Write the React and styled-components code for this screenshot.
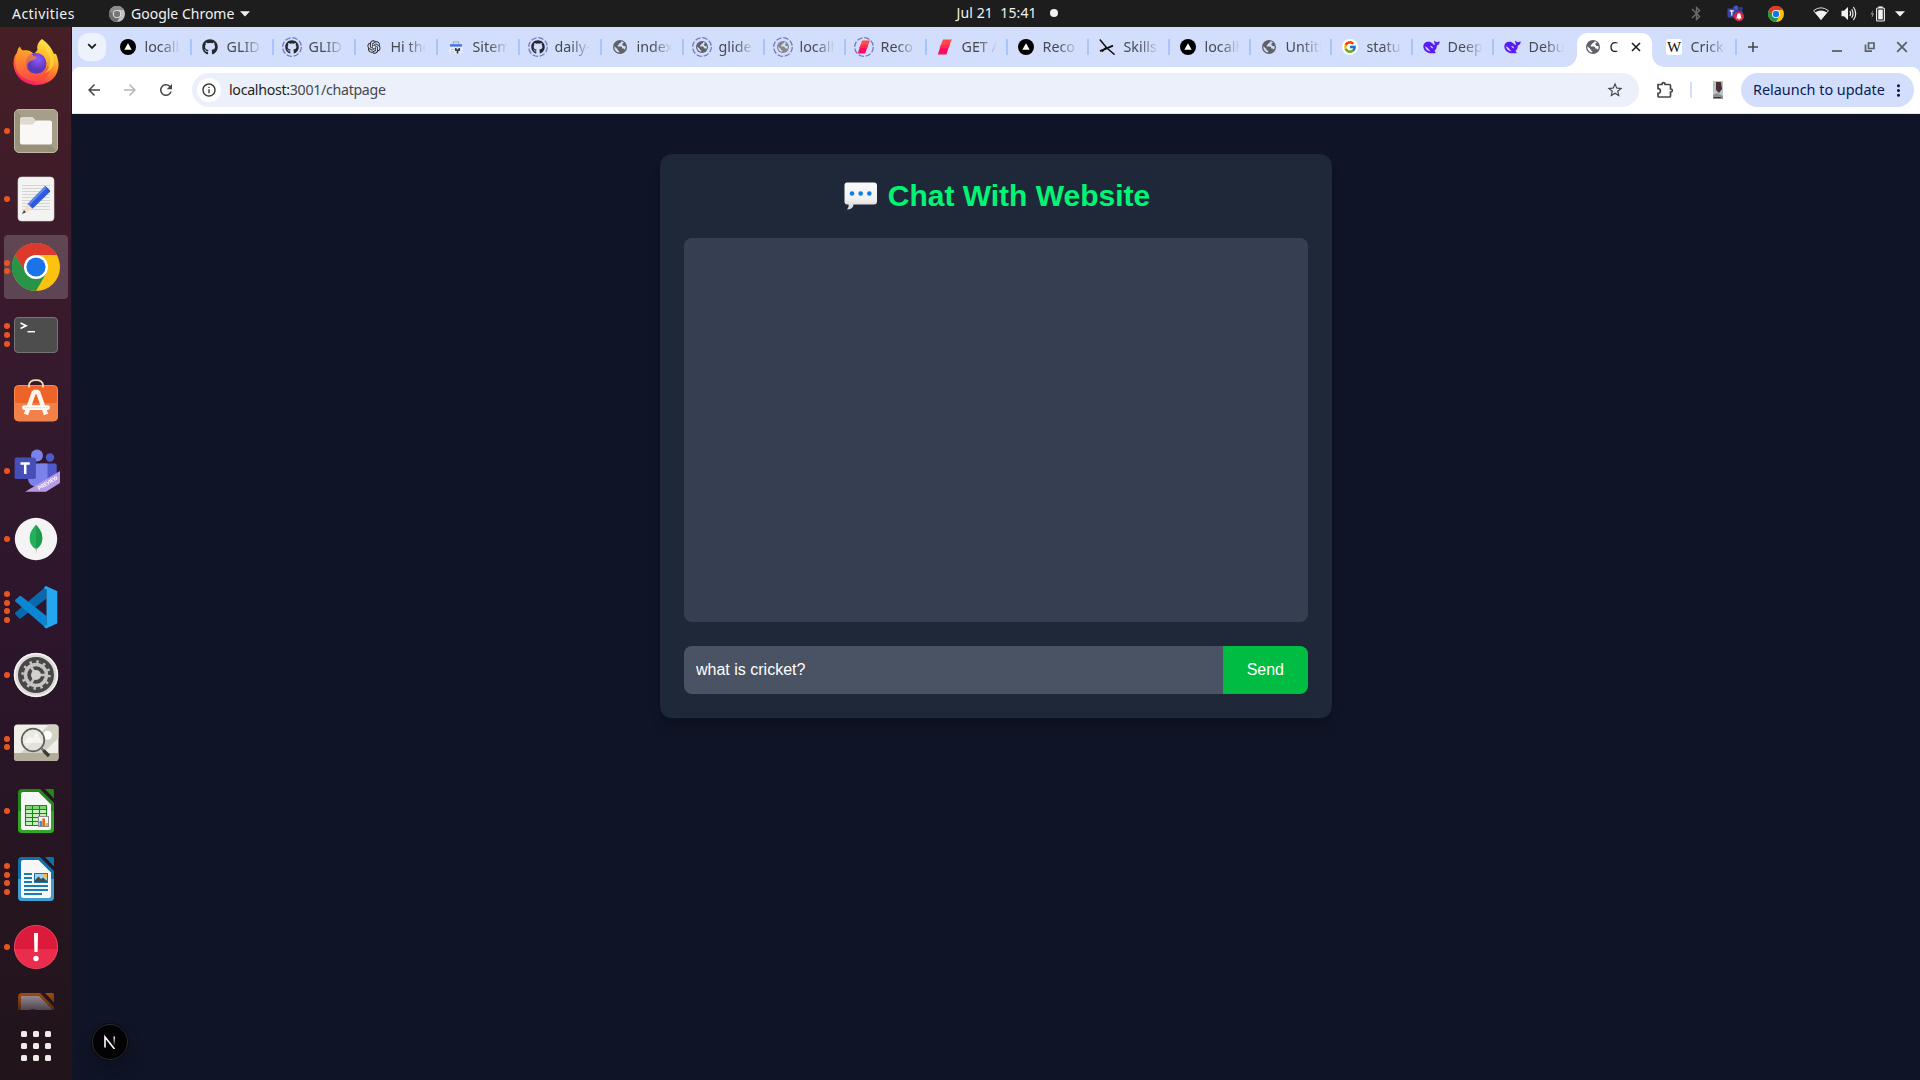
import React from "react";
import styled, { createGlobalStyle, css } from "styled-components";
import { FaGithub } from "react-icons/fa";
import { FcGoogle } from "react-icons/fc";
import { RiOpenaiFill } from "react-icons/ri";
import {
  MdArrowBack,
  MdArrowForward,
  MdRefresh,
  MdOutlineInfo,
  MdStarBorder,
  MdMoreVert,
  MdBluetooth,
} from "react-icons/md";

const Global = createGlobalStyle`
  * { box-sizing: border-box; }
  html, body, #root { margin: 0; height: 100%; }
  body { overflow: hidden; background: #0f1425; }
  svg { display: block; flex: none; }
`;

const uiFont = css`
  font-family: "Noto Sans", "Open Sans", sans-serif;
`;

const Desktop = styled.div`
  width: 1920px;
  height: 1080px;
  display: flex;
  flex-direction: column;
  overflow: hidden;
`;

/* ---------- top panel ---------- */
const Panel = styled.header`
  ${uiFont}
  height: 27px;
  flex: none;
  background: #1d1d1d;
  color: #f2f2f2;
  font-size: 14px;
  line-height: 26px;
  display: grid;
  grid-template-columns: 1fr auto 1fr;
  white-space: pre;
`;
const PanelLeft = styled.div`
  display: flex;
  align-items: center;
  padding-left: 12px;
`;
const PanelLabel = styled.span`
  width: ${(p) => p.$w}px;
  letter-spacing: ${(p) => p.$ls || 0}px;
`;
const AppMenu = styled.div`
  display: flex;
  align-items: center;
  margin-left: 35px;
`;
const AppName = styled(PanelLabel)`
  margin: 0 5px 0 6px;
`;
const PanelClock = styled.div`
  display: flex;
  align-items: center;
  padding: 0 0 1px 94px;
  gap: 10px;
`;
const Dot = styled.i`
  width: 8px;
  height: 8px;
  border-radius: 50%;
  background: #f2f2f2;
`;
const Tray = styled.div`
  display: flex;
  align-items: center;
  justify-content: flex-end;
  padding-right: 15px;
`;
const TrayItem = styled.span`
  width: ${(p) => p.$w}px;
  height: 26px;
  display: flex;
  align-items: center;
  justify-content: center;
`;

/* ---------- dock ---------- */
const Body = styled.div`
  flex: 1;
  display: flex;
  min-height: 0;
`;
const Dock = styled.nav`
  width: 72px;
  flex: none;
  display: flex;
  flex-direction: column;
  background: linear-gradient(#471f25 0%, #3a1a2c 24%, #30182d 45%, #2b152a 62%, #25151f 84%, #21141b 100%);
  border-right: 1px solid #1c1420;
`;
const DockList = styled.div`
  height: 983px;
  padding: 4px 0 0 4px;
  display: flex;
  flex-direction: column;
  gap: 4px;
  overflow: hidden;
  mask-image: linear-gradient(#000 965px, rgba(0, 0, 0, 0.35) 983px);
`;
const DockSlot = styled.div`
  width: 64px;
  height: 64px;
  flex: none;
  display: grid;
  grid-template-columns: 5px 54px 5px;
  align-items: center;
  border-radius: 4px;
  background: ${(p) => (p.$active ? "rgba(255,255,255,.19)" : "transparent")};
`;
const Pips = styled.div`
  display: flex;
  flex-direction: column;
  gap: 2.7px;
  width: 6px;
`;
const Pip = styled.i`
  width: 6px;
  height: 6px;
  border-radius: 50%;
  background: #eb5420;
`;
const AppGrid = styled.div`
  display: grid;
  grid-template-columns: repeat(3, 6px);
  gap: 6px;
  margin: 21px 0 0 21px;
`;
const GridCell = styled.i`
  height: 6px;
  border-radius: 1.5px;
  background: #eeebe8;
`;

/* ---------- browser ---------- */
const Browser = styled.main`
  flex: 1;
  display: flex;
  flex-direction: column;
  min-width: 0;
`;
const TabStrip = styled.div`
  ${uiFont}
  height: 40px;
  flex: none;
  background: #d2defc;
  display: flex;
  align-items: center;
  padding-left: 6px;
  font-size: 14.3px;
  color: #474a50;
`;
const TabSearch = styled.button`
  width: 28px;
  height: 28px;
  margin: 0 4px 1px 0;
  border: 0;
  padding: 0;
  border-radius: 10px;
  background: #edf2fc;
  display: flex;
  align-items: center;
  justify-content: center;
`;
const Tab = styled.div`
  width: ${(p) => p.$w}px;
  height: 28px;
  margin-bottom: 1px;
  flex: none;
  display: flex;
  align-items: center;
  padding-left: 8px;
`;
const FavSlot = styled.span`
  width: 20px;
  height: 20px;
  flex: none;
  display: flex;
  align-items: center;
  justify-content: center;
`;
const TabTitle = styled.span`
  width: ${(p) => p.$w || 35}px;
  margin-left: 6.5px;
  line-height: 20px;
  overflow: hidden;
  white-space: nowrap;
  mask-image: linear-gradient(90deg, #000 ${(p) => (p.$w ? 60 : 45)}%, transparent 100%);
`;
const Divider = styled.i`
  width: 2px;
  height: 16px;
  margin-left: auto;
  background: #a8c4fb;
`;
const ActiveTab = styled.div`
  width: 75px;
  height: 34px;
  align-self: flex-end;
  margin: 0 4px 0 2px;
  padding: 0 11px 6px 6px;
  flex: none;
  display: flex;
  align-items: center;
  background: #fff;
  color: #1f1f1f;
  border-radius: 10px 10px 0 0;
  position: relative;
  &::before,
  &::after {
    content: "";
    position: absolute;
    bottom: 0;
    width: 12px;
    height: 12px;
  }
  &::before {
    left: -12px;
    background: radial-gradient(circle at 0 0, transparent 11.5px, #fff 12px);
  }
  &::after {
    right: -12px;
    background: radial-gradient(circle at 100% 0, transparent 11.5px, #fff 12px);
  }
`;
const CloseMark = styled.span`
  margin-left: auto;
`;
const NewTab = styled.span`
  margin: 0 0 1px 10px;
`;
const WindowControls = styled.div`
  margin: 0 12px 1px auto;
  display: flex;
  align-items: center;
  gap: 20.5px;
`;
const ToolbarBack = styled.div`
  background: #d2defc;
  flex: none;
`;
const Toolbar = styled.div`
  ${uiFont}
  height: 47px;
  background: #fff;
  border-radius: 8px 8px 0 0;
  border-bottom: 1px solid #dfe3ea;
  display: flex;
  align-items: center;
  padding: 0 6px 0 13px;
  font-size: 14.2px;
  color: #45484d;
`;
const NavIcon = styled.span`
  width: 20px;
  margin-right: 16px;
  color: ${(p) => (p.$off ? "#b4b6b9" : "#474747")};
`;
const Omnibox = styled.div`
  width: 1447px;
  height: 34px;
  margin-left: -1px;
  border-radius: 17px;
  background: #ecf0fa;
  display: flex;
  align-items: center;
  padding: 0 15px 0 5px;
`;
const SiteInfo = styled.span`
  width: 24px;
  height: 24px;
  border-radius: 50%;
  background: #fff;
  display: flex;
  align-items: center;
  justify-content: center;
  margin-right: 8px;
  color: #333;
`;
const Url = styled.span`
  flex: 1;
  padding-bottom: 2px;
  letter-spacing: -0.3px;
  b {
    font-weight: 400;
    color: #1f1f1f;
  }
`;
const ExtensionButton = styled.span`
  margin-left: 17px;
`;
const ToolDivider = styled.i`
  width: 2px;
  height: 16px;
  margin: 0 21px 0 16px;
  background: #d2e0fc;
`;
const Relaunch = styled.button`
  ${uiFont}
  width: 173px;
  height: 34px;
  margin-left: auto;
  border: 0;
  border-radius: 17px;
  background: #d2defc;
  color: #0c1b56;
  font-size: 14.4px;
  padding: 0 6px 0 12px;
  display: flex;
  align-items: center;
  justify-content: space-between;
  white-space: nowrap;
`;
const RelaunchLabel = styled.span`
  padding-bottom: 2px;
`;

/* ---------- page ---------- */
const Page = styled.section`
  flex: 1;
  background: #0f1426;
  font-family: "Liberation Sans", Arial, sans-serif;
  padding-top: 40px;
  position: relative;
`;
const Card = styled.div`
  width: 672px;
  margin: 0 auto;
  padding: 24px;
  border-radius: 12px;
  background: #1e2838;
  box-shadow: 0 10px 15px -3px rgba(0, 0, 0, 0.1), 0 4px 6px -4px rgba(0, 0, 0, 0.1);
`;
const Title = styled.h1`
  margin: 0 0 24px;
  padding-left: 2px;
  display: flex;
  justify-content: center;
  align-items: center;
  gap: 10px;
  font-size: 30px;
  line-height: 36px;
  color: #00f577;
`;
const ChatLog = styled.div`
  height: 384px;
  margin-bottom: 24px;
  border-radius: 8px;
  background: #363e52;
`;
const Composer = styled.form`
  display: flex;
  height: 48px;
`;
const Field = styled.input`
  flex: 1;
  min-width: 0;
  border: 0;
  outline: 0;
  padding: 0 12px;
  border-radius: 8px 0 0 8px;
  background: #4a5364;
  color: #fff;
  font: 16px "Liberation Sans", Arial, sans-serif;
`;
const Send = styled.button`
  border: 0;
  padding: 0 24px;
  border-radius: 0 8px 8px 0;
  background: #00bc42;
  color: #fff;
  font: 16px "Liberation Sans", Arial, sans-serif;
`;
const DevBadge = styled.div`
  position: absolute;
  left: 20px;
  bottom: 20px;
  width: 36px;
  height: 36px;
  border-radius: 50%;
  background: #030305;
  border: 1px solid #2a2b30;
  box-shadow: 0 0 0 1px #0a0c14, 0 12px 20px rgba(0, 0, 0, 0.14);
  display: flex;
  align-items: center;
  justify-content: center;
`;

/* ---------- drawings ---------- */
const Caret = () => (
  <svg width="10" height="6" viewBox="0 0 10 6"><path d="M0 0.3H10L5 5.6Z" fill="#f2f2f2" /></svg>
);

const ChromeLogo = ({ size, gray }) => {
  const c = gray
    ? { r: "#8c8c8c", y: "#c2c2c2", g: "#6f6f6f", b: "#777", w: "#eee" }
    : { r: "#dd3a2e", y: "#fcc210", g: "#279447", b: "#1a73e8", w: "#fff" };
  return (
    <svg width={size} height={size} viewBox="0 0 48 48">
      <circle cx="24" cy="24" r="24" fill={c.y} />
      <path d="M24 24L3.2 12A24 24 0 0 1 44.8 12H24Z" fill={c.r} />
      <path d="M3.2 12A24 24 0 0 0 24 48L34.4 30L24 24L13.6 30Z" fill={c.g} />
      <path d="M3.2 12L13.6 30L24 12Z" fill={c.g} />
      <path d="M3.2 12A24 24 0 0 1 44.8 12H24A12 12 0 0 0 12.4 27.2Z" fill={c.r} />
      <circle cx="24" cy="24" r="12" fill={c.w} />
      <circle cx="24" cy="24" r="9.6" fill={c.b} />
    </svg>
  );
};

const Globe = ({ size = 14, color = "#5f6368", sea = "#d2defc" }) => (
  <svg width={size} height={size} viewBox="0 0 14 14">
    <circle cx="7" cy="7" r="7" fill={color} />
    <path d="M8.600 1.300C8.300 2.600 7.600 3 6.400 3.200C6.300 4.300 5.600 4.700 4.800 4.900V6.400H8C9 6.500 9.200 7.200 9.200 8.400H10.500C11.300 8.500 11.600 9.100 11.500 10C12.400 8.800 12.800 7.600 12.600 6.200L10.600 5.900L9.400 5V3.600L10.900 2.700C10.300 2 9.600 1.600 8.600 1.300Z" fill={sea} />
    <path d="M1.400 6.300L4.600 9.200V10.300L6.200 11V12.600C3.200 12.300 1.200 9.700 1.400 6.300Z" fill={sea} />
  </svg>
);

const Puzzle = () => (
  <svg width="18" height="18" viewBox="0 0 18 18" fill="none" stroke="#474747" strokeWidth="1.700">
    <path d="M2 3.500H6V3Q6 1.700 7.500 1.700T9 3V3.500H13.500Q14.500 3.500 14.500 4.500V8H15Q16.300 8 16.300 9.500T15 11H14.500V15Q14.500 16 13.500 16H3Q2 16 2 15V12.300H2.700Q4.500 12 4.500 10T2.700 7.700H2Z" />
  </svg>
);

const TeamsTray = () => (
  <svg width="18" height="17" viewBox="0 0 18 17">
    <circle cx="9" cy="3" r="2.6" fill="#4b52c4" />
    <circle cx="14" cy="3.6" r="1.8" fill="#363b94" />
    <rect x="6" y="5" width="10" height="8" rx="2" fill="#343a93" />
    <rect x="0.5" y="3.5" width="8.500" height="9" rx="1" fill="#3d44a8" />
    <path d="M2.800 5.800H6.800M4.800 5.800V10.600" stroke="#fff" strokeWidth="1.200" />
    <circle cx="12" cy="11.500" r="5" fill="#cf2846" />
    <path d="M9.200 13.400C10.400 12 9.700 8.300 12 8.300S13.600 12 14.800 13.400ZM11.200 13.800H12.800V14.600H11.200Z" fill="#fff" />
  </svg>
);
const Wifi = () => (
  <svg width="16" height="13" viewBox="0 0 16 13">
    <path d="M8 12.600L0.600 3.600Q8 -2 15.400 3.600Z" fill="none" stroke="#f2f2f2" strokeWidth="0.900" />
    <path d="M8 12.800L2 5.400Q8 1.400 14 5.400Z" fill="#f2f2f2" />
  </svg>
);
const Volume = () => (
  <svg width="16" height="15" viewBox="0 0 16 15" fill="none" stroke="#f2f2f2" strokeWidth="1.200">
    <path d="M0.500 4.800H3L7 1V14L3 10.200H0.500Z" fill="#f2f2f2" stroke="none" />
    <path d="M8.800 5Q10.400 7.500 8.800 10M10.700 3.200Q13.300 7.500 10.700 11.800M12.400 1Q17 7.500 12.400 14" />
  </svg>
);
const Battery = () => (
  <svg width="15" height="16" viewBox="0 0 15 16">
    <path d="M3 4L0.500 8.600H2.200L1.500 12.400L4.200 7.600H2.500Z" fill="#8b8b8b" />
    <rect x="6.600" y="2" width="7.800" height="13" rx="1" fill="none" stroke="#f2f2f2" strokeWidth="1.100" />
    <rect x="8.200" y="3.600" width="4.600" height="9.800" fill="#f2f2f2" />
    <rect x="8.400" y="0.400" width="4.200" height="1.600" fill="#f2f2f2" />
  </svg>
);

const Vercel = () => (
  <svg width="16" height="16" viewBox="0 0 16 16">
    <circle cx="8" cy="8" r="8" fill="#000" />
    <path d="M8 4.200L11.700 10.800H4.300Z" fill="#fff" />
  </svg>
);
const Dashed = ({ children }) => (
  <svg width="20" height="20" viewBox="0 0 20 20">
    <circle cx="10" cy="10" r="9.300" fill="none" stroke="#7378bd" strokeWidth="1.300" strokeDasharray="5.500 1.800" />
    <svg x="3" y="3" width="14" height="14">{children}</svg>
  </svg>
);
const RedSlash = ({ size = 16 }) => (
  <svg width={size} height={size} viewBox="0 0 16 16">
    <path d="M6 0.500H14.800L11.500 9H2.600Z" fill="#ff4b47" />
    <path d="M3.600 7H12.200L9.400 15.500H0.800Z" fill="#fd0d62" />
    <path d="M4.300 5.500H12.800L11.600 9H2.900Z" fill="#ff2c56" />
  </svg>
);
const Sitemap = () => (
  <svg width="14" height="14" viewBox="0 0 14 14">
    <rect x="0.500" y="5.500" width="13" height="8" rx="1" fill="#e6ebf5" />
    <path d="M4.500 4V1.800H9.500V4" fill="none" stroke="#a9b3c7" strokeWidth="1.200" />
    <rect x="1" y="4.200" width="12" height="2.400" fill="#4470ea" />
    <path d="M2 9.500H5M2 12H5" stroke="#bcc4d4" strokeWidth="1" />
    <path d="M6.800 8V10.200H10.200V8M8.500 10V13.600" fill="none" stroke="#3c4048" strokeWidth="1.700" />
  </svg>
);
const Branch = () => (
  <svg width="16" height="16" viewBox="0 0 16 16" fill="none" stroke="#111">
    <path d="M0.800 0.600L7.600 8.800L15.600 15.600" strokeWidth="1.500" />
    <path d="M1 12.200L7.600 9.400L14 6.600" strokeWidth="1.900" />
    <path d="M3.200 13L7 8.200" strokeWidth="1.100" />
  </svg>
);
const Whale = () => (
  <svg width="17" height="14" viewBox="0 0 17 14">
    <path d="M0.300 6.200C0.300 3.200 3 1.300 6 1.800C7.500 1.200 8.400 2.600 9.700 3.500C10 4.600 11 5 12.200 4.400C11 3 11 1.600 11.400 0.500C12.200 1.700 13 2.200 14 2.200C15 1.800 16 1.400 16.800 1.400C16.600 3.500 15.500 5 13.900 5.600C13.800 8 12.900 9.800 11.400 11.100L12.900 12.700C9.900 13.600 5.400 13.400 2.900 11.400C1.300 10.200 0.300 8.300 0.300 6.200Z" fill="#5a1cf5" />
    <path d="M2 6.200C2.200 8.800 4.400 11 7.500 11.400C5.600 9.800 4.800 7 2 6.200Z" fill="#d2defc" />
    <path d="M7.200 6.200C8.500 5.600 10 6.800 10 8.300C9 8.200 8 7.500 7.200 6.200Z" fill="#d2defc" />
  </svg>
);
const WikiMark = styled.span`
  width: 16px;
  height: 16px;
  border-radius: 3px;
  background: #fff;
  color: #111;
  font: 15px/16px "Liberation Serif", serif;
  display: flex;
  justify-content: center;
`;
const GoogleMark = styled.span`
  width: 16px;
  height: 16px;
  border-radius: 50%;
  background: #fff;
  display: flex;
  align-items: center;
  justify-content: center;
`;

const Bubble = () => (
  <svg width="34" height="28" viewBox="0 0 34 28">
    <defs>
      <linearGradient id="bub" x1="0" y1="0" x2="0" y2="1">
        <stop offset="0" stopColor="#fafafa" />
        <stop offset="0.6" stopColor="#f2f2f2" />
        <stop offset="1" stopColor="#cfcfcf" />
      </linearGradient>
    </defs>
    <path d="M3 0.500H30Q33 0.500 33 3.500V19.500Q33 22.500 30 22.500H9.500Q9 27.500 3 27.500Q5.200 25.500 4.600 22.500H3Q0.500 22.500 0.500 19.500V3.500Q0.500 0.500 3 0.500Z" fill="url(#bub)" />
    <circle cx="8" cy="11.500" r="2.300" fill="#0a7ff0" />
    <circle cx="16.700" cy="11.500" r="2.300" fill="#0a7ff0" />
    <circle cx="25.300" cy="11.500" r="2.300" fill="#0a7ff0" />
  </svg>
);

/* Dock icons share a 54x54 canvas centred in the 64px slot. */
const Art = ({ children }) => (
  <svg width="54" height="54" viewBox="0 0 54 54">{children}</svg>
);
const Firefox = () => (
  <Art>
    <defs>
      <linearGradient id="ffa" x1="0.75" y1="0" x2="0.3" y2="1">
        <stop offset="0" stopColor="#fff04a" /><stop offset="0.35" stopColor="#ffb52a" />
        <stop offset="0.65" stopColor="#ff6a2e" /><stop offset="1" stopColor="#f0166f" />
      </linearGradient>
      <linearGradient id="ffc" x1="0" y1="0" x2="0.6" y2="1">
        <stop offset="0" stopColor="#ffa62b" /><stop offset="1" stopColor="#ff4a3c" />
      </linearGradient>
      <radialGradient id="ffb" cx="0.6" cy="0.3"><stop offset="0" stopColor="#9059ff" /><stop offset="1" stopColor="#5b38b8" /></radialGradient>
    </defs>
    <path d="M33 3C40 8 43 13 45 18C46.500 17.500 47 18 47.500 19C50.500 27 50 32 47.600 37.500C44 45 36 49 27.500 49C15 49 4.500 40 4.500 27C4.500 22 6 19 8 16.500C8.500 14 9 12 11 10.500C11.500 12.500 12.500 13.500 14 14.500C19 13.500 22 15 25 18L28.500 14C27.500 9.500 29.500 5.500 33 3Z" fill="url(#ffa)" />
    <circle cx="27" cy="27.500" r="10.500" fill="url(#ffb)" />
    <path d="M8.500 17C12 14 18 14 22 17.500C23 19.500 27 20.500 28 21.500C27 24.500 22 24 20 26C17 29 18 35 23 37C30 39.500 37 36 38 29C44 36 38 44 27 45C14 45 6 36 6.500 26Q6.500 20 8.500 17Z" fill="url(#ffc)" opacity="0.75" />
    <path d="M34 7C37 14 42 18 41 27Q40.500 33 36 37Q44 34 45 25Q43 14 34 7Z" fill="#ffd93b" opacity="0.75" />
  </Art>
);
const Files = () => (
  <Art>
    <defs><linearGradient id="fil" x1="0" y1="1" x2="1" y2="0"><stop offset="0.5" stopColor="#989078" /><stop offset="0.5" stopColor="#a69e89" /></linearGradient></defs>
    <rect x="5.500" y="5.500" width="43" height="43" rx="4.500" fill="url(#fil)" stroke="#bdb7a6" />
    <path d="M11 15Q11 13 13 13H23.500L27 16.500V22H11Z" fill="#dedacf" />
    <path d="M11 20.500H23.500L27.500 16.500H41Q43 16.500 43 18.500V38.500Q43 40.500 41 40.500H13Q11 40.500 11 38.500Z" fill="#f9f8f6" />
  </Art>
);
const TextEditor = () => (
  <Art>
    <rect x="9" y="5" width="36" height="44" rx="3.500" fill="#f3f3f2" stroke="#d8d6d3" strokeWidth="0.6" />
    <path d="M13 13.500H41M13 16.500H41M13 19.500H41M13 22.500H41M13 25.500H41M13 28.500H41M13 31.500H41M13 34.500H41M13 37.500H41" stroke="#d0d0d0" strokeWidth="0.9" />
    <path d="M34.500 16L36.500 14L41.300 19L39.500 21Z" fill="#1d3fa8" />
    <path d="M18.500 32L35.800 14.500L41 19.700L23.500 36.800Z" fill="#2c5bdc" />
    <path d="M18.500 32L35.800 14.500L37.500 16.200L20 33.500Z" fill="#5c88f2" />
    <path d="M18.500 32L23.500 36.800L15.500 41L14 40Z" fill="#f8dcc4" />
    <path d="M15 38L17 40.200L13 42Z" fill="#444" />
  </Art>
);
const ChromeDock = () => (
  <Art><svg x="3" y="3" width="48" height="48"><ChromeLogo size={48} /></svg></Art>
);
const Terminal = () => (
  <Art>
    <rect x="5.500" y="9.500" width="43" height="35" rx="3.500" fill="#4d4d4d" stroke="#757575" />
    <path d="M11.500 15L17 17.700L11.500 20.400" fill="none" stroke="#fff" strokeWidth="1.700" />
    <path d="M18.500 23.700H26" stroke="#fff" strokeWidth="1.500" />
  </Art>
);
const Software = () => (
  <Art>
    <rect x="5.500" y="9.500" width="43" height="35.500" rx="4" fill="#ee6428" stroke="#f58b55" />
    <path d="M5.500 27H48.500V41Q48.500 45 44.500 45H9.500Q5.500 45 5.500 41Z" fill="#f28149" />
    <path d="M20 11.500V9Q20.500 4.200 27 4.200T34 9V11.500" fill="none" stroke="#f4dfae" strokeWidth="1.800" />
    <path d="M17 38.500L25 16H29L37 38.500" fill="none" stroke="#fff4ea" strokeWidth="4.500" strokeLinejoin="bevel" />
    <rect x="13" y="29.300" width="28" height="4.600" rx="2.300" fill="#fff" />
    <path d="M15 31.800H39" stroke="#f6b596" strokeWidth="0.6" />
  </Art>
);
const Teams = () => (
  <Art>
    <g transform="translate(0 3)">
      <circle cx="28" cy="8.500" r="6" fill="#7b83eb" />
      <circle cx="41" cy="10.500" r="4.200" fill="#5059c9" />
      <path d="M31 16.500H46Q47.700 16.500 47.700 18.500V28Q47 36 39 36H31Z" fill="#5059c9" />
      <path d="M19 16.500H38.500V31Q37.500 39.500 28.500 39.500T19 32Z" fill="#7b83eb" />
      <rect x="5.600" y="10.500" width="21.300" height="21.500" rx="1.800" fill="#464eb8" />
      <path d="M11.500 16.400H20.800M16.200 16.400V27" stroke="#fff" strokeWidth="2.500" />
      <path d="M16.500 44.500L51 24V36L37 44.800H16.500Z" fill="#b69ae6" />
      <text x="0" y="0" transform="translate(30.300 43.200) rotate(-31)" fontFamily="Liberation Sans, sans-serif" fontWeight="700" fontSize="5.600" fill="#fff" textLength="22" lengthAdjust="spacingAndGlyphs">PREVIEW</text>
    </g>
  </Art>
);
const Mongo = () => (
  <Art>
    <circle cx="27" cy="27" r="21.200" fill="#f4f4f4" />
    <path d="M27 12.800C30.500 17 33.300 20 33.300 26.500C33 32.500 30 35 27 37.500C24 35 20.700 32.500 20.700 26.500C20.700 20 23.500 17 27 12.800Z" fill="#21b15a" />
    <path d="M27 12.800C30.500 17 33.300 20 33.300 26.500C33 32.500 30 35 27 37.500Z" fill="#1b9b4d" />
    <path d="M26.500 36H28L27.300 41Z" fill="#aaa" />
  </Art>
);
const VSCode = () => (
  <Art>
    <path d="M6.400 34.500L10.500 38.500Q11 39 12 38.300L37.500 18.500V6L6.400 32.500Q5.600 33.500 6.400 34.500Z" fill="#0a69ad" />
    <path d="M6.400 19.800L10.500 15.900Q11 15.400 12 16.100L37.500 36V48.500L6.400 21.500Q5.600 20.700 6.400 19.800Z" fill="#0b86d2" />
    <path d="M36.800 6L48 11Q48.300 11.200 48.300 12V42.500Q48.300 43.500 47.500 43.800L37.500 48.300Q35.500 48.500 35 46L37.500 45V9.500L35 8.500Q35.500 6 36.800 6Z" fill="#27a6f0" />
  </Art>
);
const Settings = () => (
  <Art>
    <circle cx="27" cy="27" r="22.300" fill="#dcdbd9" />
    <circle cx="27" cy="27" r="21.300" fill="none" stroke="#f4f3f2" strokeWidth="1.500" />
    <circle cx="27" cy="27" r="18" fill="#474747" />
    <circle cx="27" cy="27" r="13.200" fill="none" stroke="#c4c3c1" strokeWidth="3" strokeDasharray="2.400 4.511" />
    <circle cx="27" cy="27" r="10.500" fill="none" stroke="#c4c3c1" strokeWidth="3.500" />
    <path d="M27 27L21 17M27 27L38 27M27 27L21 37" stroke="#c4c3c1" strokeWidth="2.500" />
    <circle cx="27" cy="27" r="5" fill="#d2d1cf" />
  </Art>
);
const Viewer = () => (
  <Art>
    <rect x="5" y="8.500" width="44.500" height="36.500" rx="3.500" fill="#efeee7" />
    <path d="M40 8.500H46Q49.500 8.500 49.500 12V22L34 37H12Z" fill="#d3d0c4" />
    <path d="M5 37H49.500V41.500Q49.500 45 46 45H8.500Q5 45 5 41.500Z" fill="#b3ad9b" />
    <circle cx="38.500" cy="19.300" r="4.500" fill="#fff" />
    <circle cx="24" cy="24" r="11.300" fill="#e8e8e2" fillOpacity="0.75" stroke="#5f5e5c" strokeWidth="1.700" />
    <path d="M14 27L21 20L24 23L27 16L34 27" fill="#fff" opacity="0.6" />
    <path d="M32.500 32.500L35 35" stroke="#666" strokeWidth="2" />
    <path d="M34.500 34.500L40 40" stroke="#3a3a3a" strokeWidth="3.400" />
  </Art>
);
const Doc = ({ dark, light, children }) => (
  <Art>
    <path d="M13 5H31L45 19V45Q45 49 41 49H13Q9 49 9 45V9Q9 5 13 5Z" fill={dark} />
    <path d="M9 27H45V45Q45 49 41 49H13Q9 49 9 45Z" fill={light} />
    <path d="M14 8H29.500L42 20.500V43.500Q42 46 39.500 46H14.500Q12 46 12 43.500V10Q12 8 14 8Z" fill="#f7f7f7" />
    <path d="M36 5H43.500Q45 5 45 6.500V14.500Z" fill={dark} />
    {children}
  </Art>
);
const Calc = () => (
  <Doc dark="#23871b" light="#35a52a">
    <rect x="16" y="21" width="22" height="21" fill="#c9efc0" />
    <rect x="16" y="21" width="22" height="4" fill="#7fd573" />
    <path d="M16.500 21.500H37.500V41.500H16.500ZM16.500 25.500H37.500M16.500 29.500H37.500M16.500 33.500H37.500M16.500 37.500H37.500M23.500 21.500V41.500M30.500 21.500V41.500" fill="none" stroke="#178a12" strokeWidth="1.100" />
    <rect x="29.500" y="32.500" width="10" height="10" fill="#f5f5f5" stroke="#8a8a8a" />
    <path d="M30.500 37H33V42H30.500Z" fill="#2e94dc" /><path d="M33.300 34.500H36V42H33.300Z" fill="#e06a1c" /><path d="M36.300 39H39V42H36.300Z" fill="#f0b429" />
  </Doc>
);
const Writer = () => (
  <Doc dark="#1270a8" light="#3fa0cf">
    <path d="M15 22H23M15 26H23M15 30H23M15 34H39M15 38H39M15 42H33" stroke="#187db5" strokeWidth="1.900" />
    <rect x="25.500" y="21.500" width="13" height="9" fill="#9fd1f0" stroke="#1676ae" />
    <path d="M34.500 22H38V25.500Q35 25.500 34.500 22Z" fill="#f5bd1e" />
    <path d="M26 30V28L29.500 24.500L32 27L34 25.500L38 29V30Z" fill="#4a4a4a" />
  </Doc>
);
const Impress = () => (
  <Doc dark="#a4500f" light="#c66a20">
    <path d="M12 10Q12 8 14 8H29.500L42 20.500V30H12Z" fill="#a79ca4" />
    <path d="M19 23Q24 19 29 23Z" fill="#4d3540" />
  </Doc>
);
const Alert = () => (
  <Art>
    <circle cx="27" cy="27" r="22" fill="#dc1a3c" />
    <path d="M5.200 29H48.800A22 22 0 0 1 5.200 29Z" fill="#ea2d4d" />
    <circle cx="27" cy="27" r="21.600" fill="none" stroke="#f2667e" strokeWidth="0.8" opacity="0.7" />
    <path d="M25 13H29L28.600 32H25.400Z" fill="#fff" />
    <circle cx="27" cy="38.500" r="2.700" fill="#fff" />
  </Art>
);

const dockItems = [
  [Firefox, 0], [Files, 1], [TextEditor, 1], [ChromeDock, 2, true], [Terminal, 3],
  [Software, 0], [Teams, 1], [Mongo, 1], [VSCode, 4], [Settings, 1], [Viewer, 2],
  [Calc, 1], [Writer, 4], [Alert, 1], [Impress, 0],
];

const globe = <Globe />;
const smallGlobe = (c) => <Dashed><svg x="1" y="1"><Globe size={12} color={c} /></svg></Dashed>;
const github = <FaGithub size={16} color="#24292f" />;
const dashedGithub = <Dashed><FaGithub size={14} color="#24292f" /></Dashed>;

const tabs = [
  ["localhost", <Vercel />, 82],
  ["GLID-", github, 82],
  ["GLID-", dashedGithub, 82],
  ["Hi there", <RiOpenaiFill size={16} color="#222" />, 82],
  ["Sitemap", <Sitemap />, 82],
  ["daily-", dashedGithub, 82],
  ["index", globe, 82],
  ["glide", smallGlobe("#5f6368"), 81],
  ["localhost", smallGlobe("#85878a"), 81],
  ["Reco", <Dashed><RedSlash size={14} /></Dashed>, 81],
  ["GET /", <RedSlash />, 81],
  ["Reco", <Vercel />, 81],
  ["Skills", <Branch />, 81],
  ["localhost", <Vercel />, 81],
  ["Untitled", globe, 81],
  ["status", <GoogleMark><FcGoogle size={14} /></GoogleMark>, 81],
  ["Deep", <Whale />, 81],
  ["Debug", <Whale />, 81, true],
];

const Cross = ({ size, color, w }) => (
  <svg width={size} height={size} viewBox="0 0 10 10">
    <path d="M1 1L9 9M9 1L1 9" stroke={color} strokeWidth={w} />
  </svg>
);

export default function App() {
  return (
    <Desktop>
      <Global />
      <Panel>
        <PanelLeft>
          <PanelLabel $w={62} $ls={0.45}>Activities</PanelLabel>
          <AppMenu>
            <ChromeLogo size={16} gray />
            <AppName $w={104}>Google Chrome</AppName>
            <Caret />
          </AppMenu>
        </PanelLeft>
        <PanelClock>
          <PanelLabel $w={83} $ls={0.1}>{"Jul 21  15:41"}</PanelLabel>
          <Dot />
        </PanelClock>
        <Tray>
          <TrayItem $w={54}><MdBluetooth size={17} color="#6b6b6b" /></TrayItem>
          <TrayItem $w={26}><TeamsTray /></TrayItem>
          <TrayItem $w={54}><ChromeLogo size={16} /></TrayItem>
          <TrayItem $w={36}><Wifi /></TrayItem>
          <TrayItem $w={20}><Volume /></TrayItem>
          <TrayItem $w={36}><Battery /></TrayItem>
          <TrayItem $w={10}><Caret /></TrayItem>
        </Tray>
      </Panel>
      <Body>
        <Dock>
          <DockList>
            {dockItems.map(([Icon, pips, active], i) => (
              <DockSlot key={i} $active={active}>
                <Pips>{Array.from({ length: pips }, (_, n) => <Pip key={n} />)}</Pips>
                <Icon />
              </DockSlot>
            ))}
          </DockList>
          <AppGrid>{Array.from({ length: 9 }, (_, n) => <GridCell key={n} />)}</AppGrid>
        </Dock>
        <Browser>
          <TabStrip>
            <TabSearch>
              <svg width="10" height="7" viewBox="0 0 10 7"><path d="M1.200 1.200L5 5L8.800 1.200" fill="none" stroke="#1f1f1f" strokeWidth="1.800" /></svg>
            </TabSearch>
            {tabs.map(([title, icon, w, last], i) => (
              <Tab key={i} $w={w}>
                <FavSlot>{icon}</FavSlot>
                <TabTitle>{title}</TabTitle>
                {!last && <Divider />}
              </Tab>
            ))}
            <ActiveTab>
              <FavSlot><Globe sea="#fff" /></FavSlot>
              <TabTitle $w={10}>Chat</TabTitle>
              <CloseMark><Cross size={10} color="#1f1f1f" w={1.6} /></CloseMark>
            </ActiveTab>
            <Tab $w={81}>
              <FavSlot><WikiMark>W</WikiMark></FavSlot>
              <TabTitle>Cricket</TabTitle>
              <Divider />
            </Tab>
            <NewTab>
              <svg width="12" height="12" viewBox="0 0 12 12"><path d="M6 1V11M1 6H11" stroke="#474747" strokeWidth="1.600" /></svg>
            </NewTab>
            <WindowControls>
              <svg width="12" height="12" viewBox="0 0 12 12"><path d="M1 10H11" stroke="#5c6068" strokeWidth="1.800" /></svg>
              <svg width="12" height="12" viewBox="0 0 12 12" fill="none" stroke="#5c6068" strokeWidth="1.700"><path d="M4.500 2H10V7.500H4.500ZM1.500 3.500V10.200H8" /></svg>
              <Cross size={12} color="#5c6068" w={1.5} />
            </WindowControls>
          </TabStrip>
          <ToolbarBack>
            <Toolbar>
              <NavIcon><MdArrowBack size={18} /></NavIcon>
              <NavIcon $off><MdArrowForward size={18} /></NavIcon>
              <NavIcon><MdRefresh size={18} /></NavIcon>
              <Omnibox>
                <SiteInfo><MdOutlineInfo size={16} /></SiteInfo>
                <Url><b>localhost:</b>3001/chatpage</Url>
                <MdStarBorder size={18} />
              </Omnibox>
              <ExtensionButton><Puzzle /></ExtensionButton>
              <ToolDivider />
              <svg width="10" height="18" viewBox="0 0 10 18">
                <rect width="10" height="18" fill="#b9c4c6" />
                <path d="M3 1H8L9 8L6 12L3 9Z" fill="#4a2f33" />
                <path d="M0 14L4 12L10 15V18H0Z" fill="#8d8f93" />
                <path d="M1 16.500H8" stroke="#333" />
              </svg>
              <Relaunch><RelaunchLabel>Relaunch to update</RelaunchLabel><MdMoreVert size={19} /></Relaunch>
            </Toolbar>
          </ToolbarBack>
          <Page>
            <Card>
              <Title><Bubble />Chat With Website</Title>
              <ChatLog />
              <Composer>
                <Field defaultValue="what is cricket?" />
                <Send type="button">Send</Send>
              </Composer>
            </Card>
            <DevBadge>
              <svg width="14" height="14" viewBox="0 0 14 14">
                <defs><linearGradient id="nx" x1="0" y1="0" x2="0" y2="1"><stop offset="0" stopColor="#fff" /><stop offset="1" stopColor="#fff" stopOpacity="0.100" /></linearGradient></defs>
                <path d="M2 12.500V2L11.500 14" fill="none" stroke="#fff" strokeWidth="1.600" />
                <rect x="10.500" y="1.500" width="1.500" height="8.500" fill="url(#nx)" />
              </svg>
            </DevBadge>
          </Page>
        </Browser>
      </Body>
    </Desktop>
  );
}
